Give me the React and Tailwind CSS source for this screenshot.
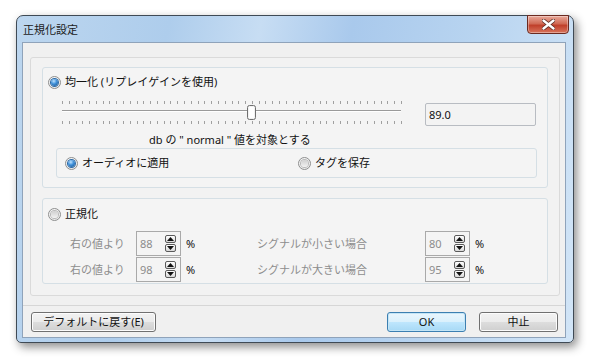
import React from "react";

function Radio({ checked }) {
  return (
    <span className="relative flex h-[13px] w-[13px] shrink-0 items-center justify-center rounded-full border border-[#8e8f8f] bg-[radial-gradient(circle_at_40%_35%,#ffffff,#e2e2e2)]">
      {checked ? (
        <span className="h-[7px] w-[7px] rounded-full bg-[radial-gradient(circle_at_40%_30%,#bfe3ff_0%,#3d8fd9_45%,#1a4f86_100%)] shadow-[0_0_0_1px_#2d6aa6]" />
      ) : (
        <span className="h-[7px] w-[7px] rounded-full bg-[linear-gradient(#cfcfcf,#f2f2f2)] shadow-[0_0_0_1px_#b8b8b8]" />
      )}
    </span>
  );
}

function SpinArrow({ up }) {
  return (
    <span className="flex h-[8px] w-[11px] items-center justify-center rounded-[2px] border border-[#5a5a5a] bg-[linear-gradient(#ffffff,#d8d8d8)]">
      <svg width="7" height="4" viewBox="0 0 7 4">
        {up ? <path d="M0 4 L3.5 0 L7 4 Z" fill="#111" /> : <path d="M0 0 L3.5 4 L7 0 Z" fill="#111" />}
      </svg>
    </span>
  );
}

function SpinBox({ value, className }) {
  return (
    <div className={"flex h-[25px] w-[45px] items-center justify-between border border-[#a9a9a9] pl-[3px] pr-[4px] " + className}>
      <span className="text-[#8c8c8c]">{value}</span>
      <div className="flex flex-col gap-[1px]">
        <SpinArrow up />
        <SpinArrow />
      </div>
    </div>
  );
}

function Slider() {
  const ticks = [];
  for (let i = 0; i <= 50; i++) {
    const x = 3 + i * 6.78;
    ticks.push(<rect key={"t" + i} x={Math.round(x)} y="1" width="1" height="3" fill="#a0a0a0" />);
    ticks.push(<rect key={"b" + i} x={Math.round(x)} y="21" width="1" height="3" fill="#a0a0a0" />);
  }
  return (
    <svg width="345" height="26" viewBox="0 0 345 26">
      {ticks}
      <rect x="3" y="10" width="339" height="1" fill="#9a9a9a" />
      <rect x="3" y="11" width="339" height="1" fill="#ffffff" />
      <rect x="188.5" y="5.5" width="8" height="14" rx="2" fill="#f2f2f2" stroke="#6f6f6f" />
      <rect x="190" y="7" width="5" height="11" rx="1" fill="#ffffff" />
    </svg>
  );
}

function Button({ children, className, focused }) {
  return (
    <button
      className={
        "flex h-[20px] items-center justify-center rounded-[3px] border text-[#111] " +
        (focused
          ? "border-[#3c7fb1] bg-[linear-gradient(#eaf6fd_0%,#d9f0fc_50%,#bee6fd_51%,#a7d9f5_100%)] shadow-[inset_0_0_0_1px_#c4e5f6] "
          : "border-[#707070] bg-[linear-gradient(#f2f2f2_0%,#ebebeb_50%,#dddddd_51%,#cfcfcf_100%)] shadow-[inset_0_0_0_1px_#fcfcfc] ") +
        className
      }
    >
      {children}
    </button>
  );
}

export default function App() {
  return (
    <div className="h-[364px] w-[594px] bg-white pl-[16px] pt-[15px] font-['Noto_Sans','Noto_Sans_CJK_JP',sans-serif] text-[11px] leading-[14px] text-[#111]">
      <div className="flex h-[328px] w-[558px] flex-col rounded-t-[7px] rounded-b-[5px] border border-[#3f4a55] bg-[linear-gradient(100deg,#bcd6ef_0%,#aecdec_25%,#c7ddf3_40%,#a9c9ec_55%,#b8d4f0_75%,#d2e5f7_100%)] shadow-[3px_4px_10px_rgba(0,0,0,0.45)]">
        <div className="flex h-[26px] items-start justify-between pl-[6px] pr-[4px]">
          <span className="self-center pt-[1px] text-[#1a1a1a]">正規化設定</span>
          <div className="-mt-[1px] flex h-[19px] w-[42px] items-center justify-center rounded-b-[4px] border border-[#6b2a20] bg-[linear-gradient(#e9a99a_0%,#d06a55_45%,#c0402b_55%,#d8745c_100%)] shadow-[inset_0_0_0_1px_rgba(255,255,255,0.35)]">
            <svg width="13" height="11" viewBox="0 0 13 11">
              <path d="M1.5 1.5 L11.5 9.5 M11.5 1.5 L1.5 9.5" stroke="#5a2a22" strokeWidth="4" strokeLinecap="round" />
              <path d="M1.5 1.5 L11.5 9.5 M11.5 1.5 L1.5 9.5" stroke="#ffffff" strokeWidth="2.4" strokeLinecap="round" />
            </svg>
          </div>
        </div>
        <div className="mx-[5px] flex h-[296px] w-[544px] flex-col border border-[#8fa3ba] bg-[#f0f0f0]">
          <div className="ml-[7px] mt-[14px] flex h-[239px] w-[530px] flex-col rounded-[3px] border border-[#dadada] bg-[#f2f2f2]">
            <div className="ml-[11px] mt-[9px] flex h-[121px] w-[506px] flex-col rounded-[3px] border border-[#d5dfe5] bg-[#f4f4f4]">
              <div className="ml-[5px] mt-[7px] flex h-[14px] items-center gap-[4px]">
                <Radio checked />
                <span>均一化 (リプレイゲインを使用)</span>
              </div>
              <div className="mt-[11px] flex h-[26px] items-start">
                <div className="ml-[16px]">
                  <Slider />
                </div>
                <div className="ml-[21px] mt-[3px] flex h-[23px] w-[111px] items-center rounded-[2px] border border-[#b8bcc2] bg-[#f3f3f3] pl-[3px]">
                  89.0
                </div>
              </div>
              <div className="mt-[7px] pl-[106px]">db の " normal " 値を対象とする</div>
              <div className="ml-[13px] mt-[1px] flex h-[30px] w-[481px] items-center rounded-[3px] border border-[#d5dfe5]">
                <div className="ml-[8px] flex w-[233px] items-center gap-[4px]">
                  <Radio checked />
                  <span>オーディオに適用</span>
                </div>
                <div className="flex items-center gap-[4px]">
                  <Radio />
                  <span>タグを保存</span>
                </div>
              </div>
            </div>
            <div className="ml-[11px] mt-[10px] flex h-[86px] w-[506px] flex-col rounded-[3px] border border-[#d5dfe5] bg-[#f4f4f4]">
              <div className="ml-[5px] mt-[8px] flex h-[14px] items-center gap-[4px]">
                <Radio />
                <span>正規化</span>
              </div>
              <div className="mt-[10px] flex h-[25px] items-center">
                <span className="w-[93px] pl-[27px] text-[#8d8d8d]">右の値より</span>
                <SpinBox value="88" />
                <span className="ml-[5px] w-[71px]">%</span>
                <span className="w-[168px] text-[#8d8d8d]">シグナルが小さい場合</span>
                <SpinBox value="80" />
                <span className="ml-[5px]">%</span>
              </div>
              <div className="mt-[1px] flex h-[25px] items-center">
                <span className="w-[93px] pl-[27px] text-[#8d8d8d]">右の値より</span>
                <SpinBox value="98" />
                <span className="ml-[5px] w-[71px]">%</span>
                <span className="w-[168px] text-[#8d8d8d]">シグナルが大きい場合</span>
                <SpinBox value="95" />
                <span className="ml-[5px]">%</span>
              </div>
            </div>
          </div>
          <div className="mt-[9px] h-[1px] w-full bg-[#d6d6d6]" />
          <div className="mt-[6px] flex h-[20px] items-center">
            <Button className="ml-[8px] w-[125px]">デフォルトに戻す(E)</Button>
            <Button focused className="ml-[231px] w-[79px]">OK</Button>
            <Button className="ml-[13px] w-[79px]">中止</Button>
          </div>
        </div>
      </div>
    </div>
  );
}
